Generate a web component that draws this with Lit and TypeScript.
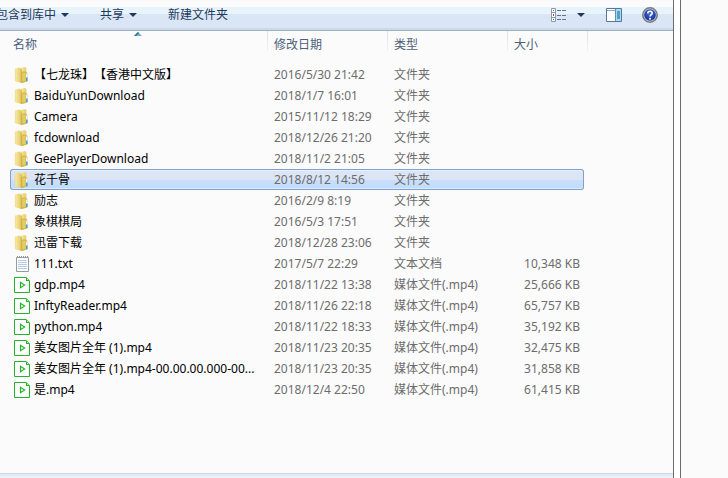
import { LitElement, html, css, svg } from "lit";
import { customElement, property } from "lit/decorators.js";
import { classMap } from "lit/directives/class-map.js";

type Kind = "folder" | "text" | "video";

interface Entry {
  name: string;
  date: string;
  kind: Kind;
  size?: string;
  selected?: boolean;
}

const TYPE_LABELS: Record<Kind, string> = {
  folder: "文件夹",
  text: "文本文档",
  video: "媒体文件(.mp4)",
};

const ENTRIES: Entry[] = [
  { name: "【七龙珠】【香港中文版】", date: "2016/5/30 21:42", kind: "folder" },
  { name: "BaiduYunDownload", date: "2018/1/7 16:01", kind: "folder" },
  { name: "Camera", date: "2015/11/12 18:29", kind: "folder" },
  { name: "fcdownload", date: "2018/12/26 21:20", kind: "folder" },
  { name: "GeePlayerDownload", date: "2018/11/2 21:05", kind: "folder" },
  { name: "花千骨", date: "2018/8/12 14:56", kind: "folder", selected: true },
  { name: "励志", date: "2016/2/9 8:19", kind: "folder" },
  { name: "象棋棋局", date: "2016/5/3 17:51", kind: "folder" },
  { name: "迅雷下载", date: "2018/12/28 23:06", kind: "folder" },
  { name: "111.txt", date: "2017/5/7 22:29", kind: "text", size: "10,348 KB" },
  { name: "gdp.mp4", date: "2018/11/22 13:38", kind: "video", size: "25,666 KB" },
  { name: "InftyReader.mp4", date: "2018/11/26 22:18", kind: "video", size: "65,757 KB" },
  { name: "python.mp4", date: "2018/11/22 18:33", kind: "video", size: "35,192 KB" },
  { name: "美女图片全年 (1).mp4", date: "2018/11/23 20:35", kind: "video", size: "32,475 KB" },
  { name: "美女图片全年 (1).mp4-00.00.00.000-00...", date: "2018/11/23 20:35", kind: "video", size: "31,858 KB" },
  { name: "是.mp4", date: "2018/12/4 22:50", kind: "video", size: "61,415 KB" },
];

@customElement("file-icon")
export class FileIcon extends LitElement {
  @property() kind: Kind = "folder";

  static styles = css`
    :host { display: block; width: 16px; height: 16px; }
    svg { display: block; }
  `;

  private folder() {
    return svg`
      <defs>
        <linearGradient id="front" x1="0" x2="1"><stop offset="0" stop-color="#faeba6"/><stop offset="1" stop-color="#e3c862"/></linearGradient>
        <linearGradient id="back" x1="0" x2="1"><stop offset="0" stop-color="#f7e9a8"/><stop offset="1" stop-color="#e6ce70"/></linearGradient>
      </defs>
      <path d="M6 1 11.2 0 12.4 1v13.5H6z" fill="url(#back)"/>
      <path d="M1 1.6 5.6.4 7.4 2.4V16L1 14.2z" fill="url(#front)"/>
      <path d="M1.3 1.8v12.2" stroke="#ecd88a" stroke-width=".6"/>
      <path d="M7.2 5.8 8.8 4.4h2.8L13.4 6v8.4L8 16H7.2z" fill="#d2b445"/>
      <path d="M8.2 5.6h3.4v8.6H8.2z" fill="#e3cb68"/>
      <path d="M7.3 2.4V16" stroke="#c9aa3c" stroke-width=".7"/>
      <path d="M12 6.5h1.4V11H12z" fill="#f1f6f4"/>
      <path d="M12 10.5h1.6V14H12z" fill="#43a4dc"/>`;
  }

  private text() {
    return svg`
      <path d="M2.5 1.5v14h12v-14z" fill="#fbfcfe" stroke="#9a9a9a"/>
      <path d="M3.5 0v2M5.5 0v2M7.5 0v2M9.5 0v2M11.5 0v2M13.5 0v2" stroke="#9a9a9a"/>
      <path d="M4 4.5h9M4 6.5h9M4 8.5h9M4 10.5h9M4 12.5h9" stroke="#b5cbe6"/>`;
  }

  private video() {
    return svg`
      <path d="M.5.5H12L15.5 4v11.5H.5z" fill="#fff" stroke="#22b528"/>
      <path d="M12 0v4h4z" fill="#22b528"/><path d="M13 1.5V3h1.5z" fill="#d9f3da"/>
      <path d="M6.5 5.3v5.4L10.6 8z" fill="none" stroke="#22b528" stroke-width="1.2"/>`;
  }

  render() {
    const art = this.kind === "folder" ? this.folder() : this.kind === "text" ? this.text() : this.video();
    return html`<svg width="16" height="16" viewBox="0 0 16 16" aria-hidden="true">${art}</svg>`;
  }
}

@customElement("tool-bar")
export class ToolBar extends LitElement {
  static styles = css`
    :host {
      display: flex;
      justify-content: space-between;
      align-items: center;
      box-sizing: border-box;
      height: 31px;
      overflow: hidden;
      border-bottom: 1px solid #9cb0ca;
      background: linear-gradient(#fbfbfb 7px, #e8f4fb 7px, #e8f4fb 14px, #dae5f6 14px, #dae5f6 28px, #ccdaec 28px);
    }
    div { display: flex; align-items: center; }
    .commands { gap: 31px; margin-left: -4px; }
    .tools { padding-right: 15px; }
    .help { margin-left: 20px; }
    .preview { margin-left: 21px; }
    button {
      display: flex;
      align-items: center;
      gap: 5px;
      padding: 0;
      border: 0;
      background: none;
      font: inherit;
      line-height: 18px;
      color: #1e395b;
      white-space: nowrap;
    }
    .views { gap: 10px; }
    svg { display: block; }
  `;

  private caret() {
    return html`<svg width="8" height="4" viewBox="0 0 8 4" aria-hidden="true"><path d="M0 0h8L4 4z" fill="#1e395b"/></svg>`;
  }

  render() {
    return html`
      <div class="commands">
        <button>包含到库中${this.caret()}</button>
        <button>共享${this.caret()}</button>
        <button>新建文件夹</button>
      </div>
      <div class="tools">
        <button class="views" aria-label="更改您的视图">
          <svg width="16" height="14" viewBox="0 0 16 14">
            <path d="M.5.5h4v13h-4zM.5 4.5h4M.5 9.5h4" fill="#fff" stroke="#8f9bab"/>
            <path d="M2 2h1v1H2z" fill="#3c6fb0"/><path d="M2 6h1v2H2z" fill="#c23c30"/><path d="M2 11h1v1H2z" fill="#3c6fb0"/>
            <path d="M6 2.5h4M11 2.5h4M6 7.5h4M11 7.5h4M6 11.5h4M11 11.5h4" stroke="#66758c"/>
          </svg>
          ${this.caret()}
        </button>
        <button class="preview" aria-label="显示预览窗格">
          <svg width="16" height="14" viewBox="0 0 16 14">
            <path d="M.5.5h15v13H.5z" fill="#fff" stroke="#56779c"/>
            <path d="M1 2.5h8" stroke="#8fa7c2"/>
            <path d="M9.5 1v12" stroke="#6c8cae"/>
            <path d="M10 1h5v12h-5z" fill="#9be3f3"/>
            <path d="M11 3h3v8h-3z" fill="#5b9bc4"/>
          </svg>
        </button>
        <button class="help" aria-label="获取帮助">
          <svg width="16" height="16" viewBox="0 0 16 16">
            <defs><radialGradient id="ball" cy=".35"><stop offset="0" stop-color="#4a72d8"/><stop offset="1" stop-color="#1b3ca6"/></radialGradient></defs>
            <circle cx="8" cy="8" r="7.2" fill="#cfd2d7" stroke="#777b81" stroke-width="1.5"/>
            <circle cx="8" cy="8" r="5.8" fill="url(#ball)"/>
            <path d="M5.8 6.4C5.8 3.5 10.3 3.6 10.2 6.2 10.1 7.7 8 7.7 8 9.6" fill="none" stroke="#fff" stroke-width="1.6"/>
            <circle cx="8" cy="11.7" r="1" fill="#fff"/>
          </svg>
        </button>
      </div>
    `;
  }
}

@customElement("file-list")
export class FileList extends LitElement {
  static styles = css`
    :host { display: block; padding-left: 10px; }
    table { width: 100%; table-layout: fixed; border-collapse: separate; border-spacing: 0; }
    .name { width: 257px; }
    .date, .type { width: 120px; }
    .size { width: 77px; }
    th, td { padding: 0; text-align: left; font-weight: normal; white-space: nowrap; line-height: 18px; }
    th {
      position: relative;
      height: 27px;
      background: linear-gradient(#d5e3f2, #edf2f8) 0 0 / 1px 20px no-repeat;
    }
    th:first-child { background: none; }
    th:last-child { background-position: 3px 0; }
    th button {
      padding: 0 0 0 7px;
      border: 0;
      background: none;
      font: inherit;
      color: #4c607a;
    }
    th:first-child button { padding-left: 3px; }
    .sort { position: absolute; top: 1px; left: 50%; margin-left: -5px; }
    .gap td { height: 6px; line-height: 6px; }
    .row td {
      box-sizing: border-box;
      height: 21px;
      border: 0 solid transparent;
      border-width: 1px 0;
      padding-left: 7px;
      color: #6d6d6d;
    }
    .row .first { padding-left: 4px; color: #000; }
    .label { display: flex; align-items: center; gap: 4px; }
    .row .amount { padding: 0 4px 0 0; text-align: right; }
    .selected td:not(:last-child) {
      border-color: #7da2ce;
      background: linear-gradient(#dbe5f6 10px, #c9e0fc 10px, #c1dbfc);
      box-shadow: inset 0 1px #e9f1fb, inset 0 -1px #dcebfd;
    }
    .selected td.first { border-left-width: 1px; padding-left: 3px; border-radius: 3px 0 0 3px; }
    .selected td.amount { border-right-width: 1px; border-radius: 0 3px 3px 0; }
  `;

  render() {
    return html`
      <table>
        <colgroup><col class="name"><col class="date"><col class="type"><col class="size"><col></colgroup>
        <thead>
          <tr>
            <th aria-sort="ascending">
              <button>名称</button>
              <svg class="sort" width="8" height="4" viewBox="0 0 8 4" aria-hidden="true"><path d="M0 4 4 0 8 4z" fill="#6fb2d0"/><path d="M0 4 4 0 5 1 2 4z" fill="#356b88"/></svg>
            </th>
            <th><button>修改日期</button></th>
            <th><button>类型</button></th>
            <th><button>大小</button></th>
            <th></th>
          </tr>
        </thead>
        <tbody>
          <tr class="gap"><td colspan="5"></td></tr>
          ${ENTRIES.map((e) => html`
            <tr class=${classMap({ row: true, selected: !!e.selected })}>
              <td class="first"><div class="label"><file-icon .kind=${e.kind}></file-icon><span>${e.name}</span></div></td>
              <td>${e.date}</td>
              <td>${TYPE_LABELS[e.kind]}</td>
              <td class="amount">${e.size ?? ""}</td>
              <td></td>
            </tr>`)}
        </tbody>
      </table>
    `;
  }
}

@customElement("app-root")
export class AppRoot extends LitElement {
  static styles = css`
    :host {
      display: grid;
      grid-template-columns: 1fr 55px;
      min-height: 100vh;
      background: #fbfbfb;
      font: 12px "Noto Sans", "Noto Sans CJK SC", sans-serif;
      text-spacing-trim: space-all;
    }
    main { display: flex; flex-direction: column; min-width: 0; }
    file-list { flex: 1; }
    footer {
      height: 4px;
      border-top: 1px solid #ccd6e6;
      background: linear-gradient(#dde8f5, #f1f6fb);
    }
    aside { display: flex; border-left: 1px solid #6c6c6c; }
    .gutter { width: 6px; background: #fff; border-right: 1px solid #6c6c6c; }
  `;

  render() {
    return html`
      <main>
        <tool-bar></tool-bar>
        <file-list></file-list>
        <footer></footer>
      </main>
      <aside><div class="gutter"></div></aside>
    `;
  }
}
